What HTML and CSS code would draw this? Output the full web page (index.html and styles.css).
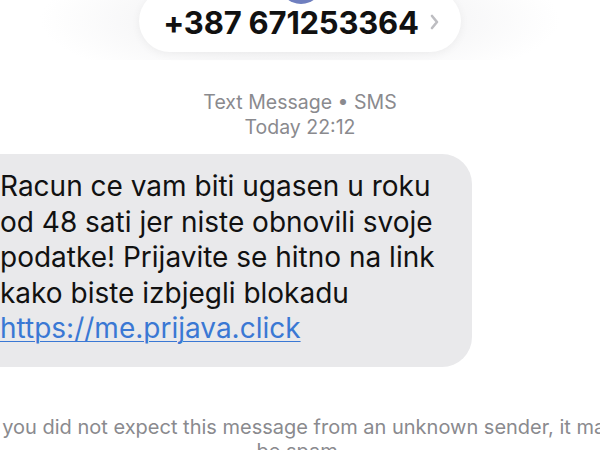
FILE: index.html
```html
<!DOCTYPE html>
<html lang="bs">
<head>
<meta charset="utf-8">
<title>+387 671253364</title>
<link rel="stylesheet" href="styles.css">
</head>
<body>
<div class="thread">
  <header class="contact-bar">
    <span class="avatar"></span>
    <div class="contact-pill">
      <span class="contact-number">+387 671253364</span>
      <svg class="chevron" width="9" height="16" viewBox="0 0 9 16" aria-hidden="true">
        <path d="M2 2 L7 8 L2 14" fill="none" stroke="#bdbdc1" stroke-width="2.6" stroke-linecap="round" stroke-linejoin="round"/>
      </svg>
    </div>
  </header>

  <div class="thread-meta">
    <div>Text Message • SMS</div>
    <div>Today 22:12</div>
  </div>

  <div class="bubble">
    Racun ce vam biti ugasen u roku<br>
    od 48 sati jer niste obnovili svoje<br>
    podatke! Prijavite se hitno na link<br>
    kako biste izbjegli blokadu<br>
    <a class="bubble-link" href="#">https://me.prijava.click</a>
  </div>

  <p class="spam-note">If you did not expect this message from an unknown sender, it may<br>be spam.</p>
</div>
</body>
</html>
```

FILE: styles.css
```css
html, body {
  margin: 0;
  padding: 0;
  background: #ffffff;
}

body {
  width: 600px;
  height: 450px;
  overflow: hidden;
  font-family: Inter, "Liberation Sans", sans-serif;
}

.thread {
  display: flex;
  flex-direction: column;
  align-items: center;
}

/* frosted header with the sender */
.contact-bar {
  position: relative;
  align-self: stretch;
  display: flex;
  justify-content: center;
  height: 60px;
  background: radial-gradient(ellipse 260px 70px at 50% 20px, #f2f2f3 0%, #f7f7f8 60%, #ffffff 100%);
}

.avatar {
  position: absolute;
  left: 279px;
  top: -40px;
  width: 44px;
  height: 44px;
  border-radius: 50%;
  background: #6f7fbf;
  z-index: 2;
}

.contact-pill {
  display: flex;
  align-items: center;
  gap: 11px;
  margin-top: -10px;
  height: 62px;
  padding: 0 22px 0 24px;
  background: #ffffff;
  border-radius: 31px;
  box-shadow: 0 2px 10px rgba(0, 0, 0, 0.05);
}

.contact-number {
  font-size: 31px;
  font-weight: 700;
  color: #111111;
  letter-spacing: -0.2px;
  padding-top: 2px;
}

.chevron {
  margin-top: 2px;
}

.thread-meta {
  margin-top: 30px;
  text-align: center;
  font-size: 19.5px;
  line-height: 25px;
  color: #8a8a8e;
}

.bubble {
  align-self: flex-start;
  margin-top: 14px;
  margin-left: -40px;
  width: 452px;
  padding: 15px 20px 20px 40px;
  background: #e9e9eb;
  border-radius: 30px;
  font-size: 28px;
  line-height: 35.5px;
  color: #111111;
}

.bubble-link {
  color: #3a78d4;
  text-decoration: underline;
  text-decoration-thickness: 1px;
  text-underline-offset: 3px;
}

.spam-note {
  flex: none;
  width: 660px;
  margin: 48px 0 0 0;
  text-align: center;
  font-size: 20px;
  line-height: 24px;
  color: #8a8a8e;
}
```
